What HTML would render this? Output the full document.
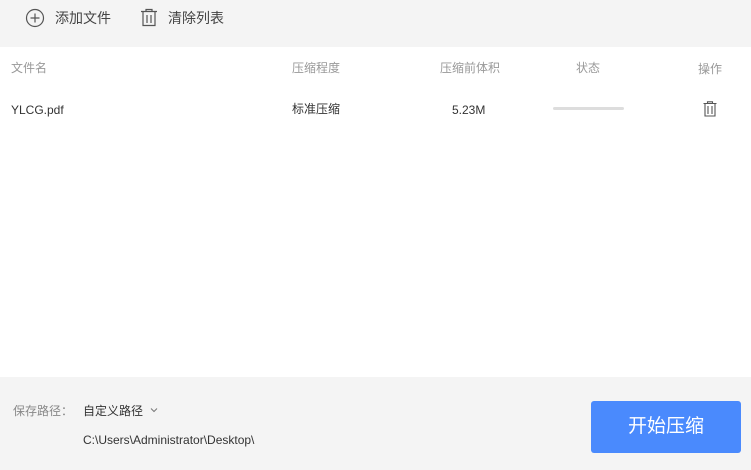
<!DOCTYPE html>
<html><head><meta charset="utf-8"><style>
*{margin:0;padding:0;box-sizing:border-box}
body{width:751px;height:470px;background:#fff;font-family:"Liberation Sans","Noto Sans CJK SC",sans-serif;position:relative;overflow:hidden;font-size:12px}
.a{position:absolute;white-space:nowrap;line-height:16px}
.top{position:absolute;left:0;top:0;width:751px;height:47px;background:#f4f4f4}
.bot{position:absolute;left:0;top:377px;width:751px;height:93px;background:#f4f4f4}
.h{color:#999;font-size:12px}
</style></head><body>
<div class="top"></div>
<svg class="a" style="left:25px;top:8px" width="20" height="20" viewBox="0 0 20 20"><circle cx="10" cy="10" r="8.5" fill="none" stroke="#555" stroke-width="1.2"/><path d="M10 5.5v9M5.5 10h9" stroke="#555" stroke-width="1.2"/></svg>
<div class="a" style="left:55px;top:9px;font-size:14px;color:#444;line-height:19px">添加文件</div>
<svg class="a" style="left:140px;top:8px" width="18" height="19" viewBox="0 0 18 19"><path d="M1 3.5h16M6 3.5V1.5h6v2M3 3.5v14h12v-14M7 7v8M11 7v8" fill="none" stroke="#555" stroke-width="1.2"/></svg>
<div class="a" style="left:168px;top:9px;font-size:14px;color:#444;line-height:19px">清除列表</div>
<div class="a h" style="left:11px;top:60px">文件名</div>
<div class="a h" style="left:292px;top:60px">压缩程度</div>
<div class="a h" style="left:440px;top:60px">压缩前体积</div>
<div class="a h" style="left:576px;top:60px">状态</div>
<div class="a h" style="left:698px;top:61px">操作</div>
<div class="a" style="left:11px;top:102px;color:#333">YLCG.pdf</div>
<div class="a" style="left:292px;top:101px;color:#333">标准压缩</div>
<div class="a" style="left:452px;top:102px;color:#333">5.23M</div>
<div class="a" style="left:553px;top:107px;width:71px;height:3px;border-radius:2px;background:#ddd"></div>
<svg class="a" style="left:703px;top:101px" width="14" height="16" viewBox="0 0 14 16"><path d="M0.5 2.5h13M4.5 2.5V0.8h5v1.7M2 2.5v12.5h10V2.5M5 5v8M9 5v8" fill="none" stroke="#555" stroke-width="1.1"/></svg>
<div class="bot"></div>
<div class="a" style="left:13px;top:403px;color:#888">保存路径：</div>
<div class="a" style="left:83px;top:403px;color:#333">自定义路径</div>
<svg class="a" style="left:150px;top:407px" width="8" height="6" viewBox="0 0 8 6"><path d="M1 1.5l3 3 3-3" fill="none" stroke="#777" stroke-width="1"/></svg>
<div class="a" style="left:83px;top:432px;color:#333">C:\Users\Administrator\Desktop\</div>
<div class="a" style="left:591px;top:401px;width:150px;height:52px;background:#4a8afd;border-radius:3px;color:#fff;font-size:19px;text-align:center;line-height:52px">开始压缩</div>
</body></html>
